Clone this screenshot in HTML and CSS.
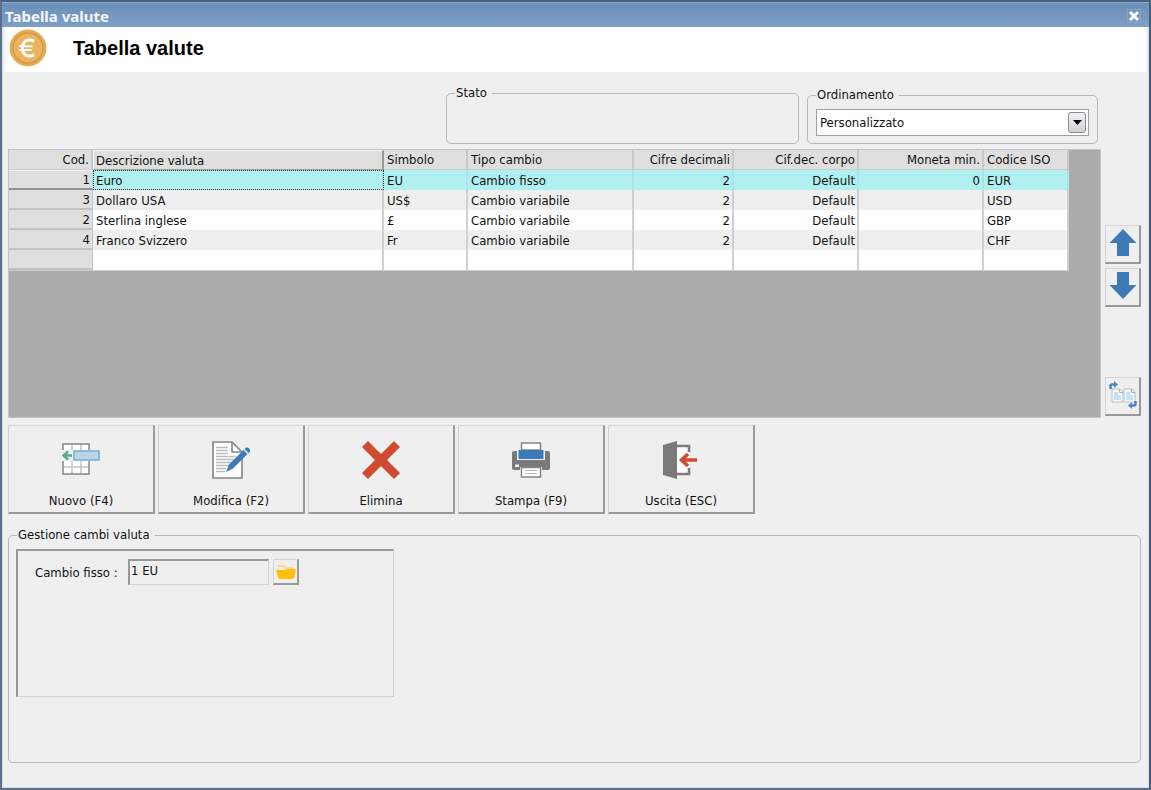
FILE: index.html
```html
<!DOCTYPE html>
<html lang="it">

<head>
    <meta charset="UTF-8">
    <meta name="viewport" content="width=device-width, initial-scale=1.0">
    <title>Tabella valute</title>
    <link rel="stylesheet" href="styles.css">
</head>

<body>
    <div class="window">
        <!-- Barra del titolo -->
        <div class="titlebar">
            <span class="titlebar-text">Tabella valute</span>
            <button class="close" type="button" aria-label="Chiudi">
                <svg width="12" height="12" viewBox="0 0 12 12"><path d="M2 2l8 8M10 2l-8 8" stroke="#fff" stroke-width="3"/></svg>
            </button>
        </div>

        <div class="client">
            <header class="header">
                <svg class="coin" width="38" height="38" viewBox="0 0 38 38">
                    <circle cx="19" cy="19" r="18.5" fill="#e5ac54"/>
                    <circle cx="19" cy="19" r="15" fill="#ebb560" stroke="#d19b48" stroke-width="1.5"/>
                    <path d="M25 12.200c-6-3-11.500-.5-11.500 6.800s5.500 9.800 11.500 6.800" fill="none" stroke="#fff" stroke-width="3"/>
                    <path d="M10 17.200h13.500M10 21h12.500" fill="none" stroke="#fff" stroke-width="2"/>
                </svg>
                <h1>Tabella valute</h1>
            </header>

            <main class="main">
                <!-- Stato e ordinamento -->
                <div class="filters">
                    <fieldset class="group stato">
                        <legend>Stato</legend>
                    </fieldset>
                    <fieldset class="group ordinamento">
                        <legend><label for="ordinamento">Ordinamento</label></legend>
                        <div class="combo">
                            <select id="ordinamento">
                                <option>Personalizzato</option>
                            </select>
                            <span class="combo-arrow">
                                <svg width="9" height="5" viewBox="0 0 9 5"><path d="M0 0h9L4.500 5z" fill="#000"/></svg>
                            </span>
                        </div>
                    </fieldset>
                </div>

                <!-- Griglia delle valute -->
                <div class="work">
                    <div class="grid-area">
                        <table class="grid">
                            <colgroup>
                                <col class="col-cod">
                                <col class="col-desc">
                                <col class="col-sim">
                                <col class="col-tipo">
                                <col class="col-cifre">
                                <col class="col-corpo">
                                <col class="col-corpo">
                                <col class="col-iso">
                            </colgroup>
                            <thead>
                                <tr>
                                    <th class="num">Cod.</th>
                                    <th class="sorted">Descrizione valuta</th>
                                    <th>Simbolo</th>
                                    <th>Tipo cambio</th>
                                    <th class="num">Cifre decimali</th>
                                    <th class="num">Cif.dec. corpo</th>
                                    <th class="num">Moneta min.</th>
                                    <th>Codice ISO</th>
                                </tr>
                            </thead>
                            <tbody>
                                <tr class="selected">
                                    <td class="num">1</td>
                                    <td class="focus">Euro</td>
                                    <td>EU</td>
                                    <td>Cambio fisso</td>
                                    <td class="num">2</td>
                                    <td class="num">Default</td>
                                    <td class="num">0</td>
                                    <td>EUR</td>
                                </tr>
                                <tr class="alt">
                                    <td class="num">3</td>
                                    <td>Dollaro USA</td>
                                    <td>US$</td>
                                    <td>Cambio variabile</td>
                                    <td class="num">2</td>
                                    <td class="num">Default</td>
                                    <td></td>
                                    <td>USD</td>
                                </tr>
                                <tr>
                                    <td class="num">2</td>
                                    <td>Sterlina inglese</td>
                                    <td>£</td>
                                    <td>Cambio variabile</td>
                                    <td class="num">2</td>
                                    <td class="num">Default</td>
                                    <td></td>
                                    <td>GBP</td>
                                </tr>
                                <tr class="alt">
                                    <td class="num">4</td>
                                    <td>Franco Svizzero</td>
                                    <td>Fr</td>
                                    <td>Cambio variabile</td>
                                    <td class="num">2</td>
                                    <td class="num">Default</td>
                                    <td></td>
                                    <td>CHF</td>
                                </tr>
                                <tr>
                                    <td></td>
                                    <td></td>
                                    <td></td>
                                    <td></td>
                                    <td></td>
                                    <td></td>
                                    <td></td>
                                    <td></td>
                                </tr>
                            </tbody>
                        </table>
                    </div>

                    <div class="side">
                        <button class="btn side-btn" type="button" aria-label="Sposta su">
                            <svg width="28" height="28" viewBox="0 0 28 28"><path d="M14 0L27.500 14H20v13H8V14H.5z" fill="#3d7ab8"/></svg>
                        </button>
                        <button class="btn side-btn" type="button" aria-label="Sposta giù">
                            <svg width="28" height="28" viewBox="0 0 28 28"><path d="M14 27L27.500 13H20V0H8v13H.5z" fill="#3d7ab8"/></svg>
                        </button>
                        <button class="btn side-btn copy" type="button" aria-label="Duplica">
                            <svg width="28" height="28" viewBox="0 0 28 28">
                                <path d="M3 8h8l3 3v10H3zM15 8h8l3 3v10H15z" fill="#f6f6f6" stroke="#c0c0c0"/>
                                <path d="M10.500 8v3.500H14M22.500 8v3.500H26" fill="none" stroke="#b0b0b0"/>
                                <path d="M5 11h4v3h3v5H5zM17 11h4v3h3v5h-7z" fill="#bfe4fa"/>
                                <path d="M1.500 8V5q0-1.500 1.500-1.500h3" fill="none" stroke="#4f87bd" stroke-width="2.600"/>
                                <path d="M5 0l4 3.500L5 7z" fill="#4f87bd"/>
                                <path d="M26.500 20v3q0 1.500-1.500 1.500h-3" fill="none" stroke="#4f87bd" stroke-width="2.600"/>
                                <path d="M23 21l-4 3.500 4 3.500z" fill="#4f87bd"/>
                            </svg>
                        </button>
                    </div>
                </div>

                <!-- Pulsanti principali -->
                <div class="toolbar">
                    <button class="btn tool" type="button">
                        <svg width="38" height="38" viewBox="0 0 38 38">
                            <path d="M1 3h26v30H1z" fill="#fff"/>
                            <path d="M10 3v30M19 3v30M1 26h26" stroke="#c4c4c4" stroke-width="1.500"/>
                            <path d="M1 9V3h26v6M1 20v13h26V20" fill="none" stroke="#858585" stroke-width="1.500"/>
                            <path d="M0 9h30v11H0z" fill="#efefef"/>
                            <path d="M12 10h25v9H12z" fill="#bfd3e8" stroke="#6fb1d2" stroke-width="1.600"/>
                            <path d="M10 14.500H2M6 10.500l-4.500 4 4.500 4" fill="none" stroke="#55ab85" stroke-width="2.400"/>
                        </svg>
                        <span>Nuovo (F4)</span>
                    </button>
                    <button class="btn tool" type="button">
                        <svg width="38" height="38" viewBox="0 0 38 38">
                            <path d="M1 1h19l10 10v26H1z" fill="#fff" stroke="#858585" stroke-width="1.600"/>
                            <path d="M20 1v10h10" fill="none" stroke="#858585" stroke-width="1.600"/>
                            <path d="M4 6.500h12M4 9.500h12M4 12.500h12M4 15.500h20M4 18.500h19M4 21.500h16M4 24.500h13M4 27.500h10M4 30.500h9" stroke="#bcbcbc" stroke-width="1.300"/>
                            <path d="M14 31l3-7.500L31.500 9l4 4L21 27.500z" fill="#3d7ab8"/>
                            <path d="M32.500 8l1.500-1.500h2L38 8.500v2L36.500 12z" fill="#3d7ab8"/>
                        </svg>
                        <span>Modifica (F2)</span>
                    </button>
                    <button class="btn tool" type="button">
                        <svg width="38" height="38" viewBox="0 0 38 38"><path d="M6 0l13 13L32 0l6 6-13 13 13 13-6 6-13-13L6 38l-6-6 13-13L0 6z" fill="#d04a30"/></svg>
                        <span>Elimina</span>
                    </button>
                    <button class="btn tool" type="button">
                        <svg width="38" height="38" viewBox="0 0 38 38">
                            <rect x="0" y="10" width="38" height="19" rx="2" fill="#7a7a7a"/>
                            <path d="M5 9v10h28V9" fill="#efefef"/>
                            <path d="M9.500 9V2h19v7z" fill="#fff" stroke="#858585" stroke-width="1.500"/>
                            <path d="M6.500 9h25v9h-25z" fill="#3d7ab8"/>
                            <rect x="3" y="23.500" width="4" height="2.500" rx="1" fill="#fff"/>
                            <path d="M8 26h22v4H8z" fill="#efefef"/>
                            <path d="M9.500 26.500h19V36h-19z" fill="#fff" stroke="#858585" stroke-width="1.500"/>
                            <path d="M13 29.500h12M13 32.500h12" stroke="#b8b8b8" stroke-width="1.200"/>
                        </svg>
                        <span>Stampa (F9)</span>
                    </button>
                    <button class="btn tool" type="button">
                        <svg width="38" height="38" viewBox="2 0 38 38">
                            <path d="M17 5h12v28H17z" fill="#fff"/>
                            <path d="M17 5h12v6M29 27v6H17" fill="none" stroke="#7a7a7a" stroke-width="2.600"/>
                            <path d="M3 4l14-4v38L3 34z" fill="#7a7a7a"/>
                            <path d="M37 19H22M28 13l-6.500 6 6.500 6" fill="none" stroke="#d04a30" stroke-width="3.600"/>
                        </svg>
                        <span>Uscita (ESC)</span>
                    </button>
                </div>

                <!-- Gestione cambi -->
                <fieldset class="group cambi">
                    <legend>Gestione cambi valuta</legend>
                    <div class="panel">
                        <label for="cambio">Cambio fisso :</label>
                        <input class="field" id="cambio" type="text" value="1 EU" readonly>
                        <button class="btn folder" type="button" aria-label="Apri">
                            <svg width="20" height="16" viewBox="0 0 20 16">
                                <path d="M2 2q0-1 1-1h5l2 2h7q1 0 1 1v5H2z" fill="#fbd99a"/>
                                <path d="M3 3h4l2 2h8v3H3z" fill="#fff3dc"/>
                                <path d="M0 6h9l1-1h10l-1.500 8q-.3 2-2 2H4q-2 0-2.300-2z" fill="#ffc010"/>
                            </svg>
                        </button>
                    </div>
                </fieldset>
            </main>
        </div>
    </div>
</body>

</html>
```
FILE: styles.css
```css
* {
    box-sizing: border-box;
}

body {
    margin: 0;
    font-family: "DejaVu Sans Condensed", "DejaVu Sans", Tahoma, sans-serif;
    font-size: 13px;
    line-height: 18px;
    color: #111;
}

button,
input,
select {
    font: inherit;
    color: inherit;
}

svg {
    display: block;
}

.window {
    display: flex;
    flex-direction: column;
    min-height: 100vh;
    border: 2px solid #5b708a;
    border-top-color: #4a617d;
    border-right-color: #465c78;
    background: #efefef;
}

/* barra del titolo */
.titlebar {
    display: flex;
    align-items: center;
    justify-content: space-between;
    height: 25px;
    padding: 1px 8px 0 3px;
    border-top: 1px solid #90add0;
    background: linear-gradient(#6a8fb8, #7d9fc5);
}

.titlebar-text {
    font-family: "Noto Sans", sans-serif;
    font-size: 15px;
    font-weight: bold;
    color: #f4f7fb;
}

.close {
    padding: 0;
    border: 1px solid #87a5c8;
    background: none;
}

.client {
    display: flex;
    flex: 1;
    flex-direction: column;
    padding: 0 2px;
    border: 1px solid #d5dde8;
    border-top: 0;
}

.header {
    display: flex;
    align-items: center;
    gap: 26px;
    height: 45px;
    padding: 0 0 4px 4px;
    background: #fff;
}

h1 {
    margin: 0;
    font-family: "Liberation Sans", Arial, sans-serif;
    font-size: 20px;
    line-height: 24px;
    color: #000;
}

.main {
    display: flex;
    flex: 1;
    flex-direction: column;
    padding: 12px 5px 24px 3px;
}

/* riquadri con titolo */
.group {
    min-width: 0;
    margin: 0;
    padding: 0 8px;
    border: 1px solid #b8b8b8;
    border-radius: 5px;
}

.group legend {
    padding: 0 5px 0 1px;
}

.filters {
    display: flex;
    align-items: flex-end;
    justify-content: flex-end;
    gap: 8px;
    padding-right: 43px;
}

.stato {
    width: 353px;
    height: 60px;
}

.ordinamento {
    width: 291px;
    height: 58px;
}

.combo {
    position: relative;
    margin-top: 5px;
}

.combo select {
    display: block;
    width: 100%;
    height: 27px;
    padding: 0 3px;
    border: 1px solid #a0a0a0;
    border-radius: 0;
    background: #fff;
    appearance: none;
}

.combo-arrow {
    position: absolute;
    top: 3px;
    right: 3px;
    display: flex;
    align-items: center;
    justify-content: center;
    width: 18px;
    height: 21px;
    border: 1px solid #8c8c8c;
    border-radius: 3px;
    background: linear-gradient(#f4f4f6, #cfcfd6);
    pointer-events: none;
}

/* griglia */
.work {
    display: flex;
    gap: 4px;
    margin-top: 5px;
}

.grid-area {
    flex: 1;
    min-width: 0;
    height: 269px;
    border: 1px solid #c4c4c8;
    background: #ababab;
}

.grid {
    width: 1060px;
    table-layout: fixed;
    border-collapse: separate;
    border-spacing: 0;
    border-bottom: 1px solid #ccc;
}

.col-cod {
    width: 84px;
}

.col-desc {
    width: 291px;
}

.col-sim {
    width: 84px;
}

.col-tipo {
    width: 166px;
}

.col-cifre {
    width: 100px;
}

.col-corpo {
    width: 125px;
}

.col-iso {
    width: 85px;
}

.grid th,
.grid td {
    height: 20px;
    padding: 0 3px;
    border-right: 2px solid #d0d0d0;
    background: #fff;
    font-weight: normal;
    line-height: 17px;
    text-align: left;
    white-space: nowrap;
}

.grid th {
    border-right-color: #c8c8c8;
    border-bottom: 1px solid #ccc;
    background: #dfdfdf;
}

.grid .num {
    padding-right: 2px;
    text-align: right;
}

.grid td:first-child {
    border-right: 1px solid #c4c4c8;
    border-bottom: 2px solid #c2c2c4;
    background: #dfdfdf;
}

.grid .alt td {
    background: #efefef;
}

.grid .alt td:first-child {
    background: #dfdfdf;
}

.grid .selected td {
    border-right-color: #aae4e4;
    background: #b0f0f0;
}

.grid .selected td:first-child {
    border-top: 1px solid #f6f6f6;
    border-bottom-color: #929292;
    background: #dfdfdf;
}

.grid .sorted {
    padding-left: 2px;
    border-top: 1px solid #f4f4f4;
    border-left: 1px solid #f4f4f4;
    border-bottom-color: #999;
    border-right-color: #999;
}

.grid .focus {
    outline: 1px dotted #333;
    outline-offset: -1px;
}

/* pulsanti in rilievo */
.btn {
    border: 1px solid #d2d2da;
    border-right: 2px solid #999;
    border-bottom: 2px solid #999;
    border-radius: 0;
    background: #efefef;
}

.side {
    display: flex;
    flex-direction: column;
    gap: 4px;
    width: 36px;
    padding: 76px 0 2px;
}

.side-btn {
    display: flex;
    justify-content: center;
    height: 39px;
    padding: 3px 0 0;
}

.side .copy {
    margin-top: auto;
}

.toolbar {
    display: flex;
    gap: 3px;
    margin-top: 7px;
}

.tool {
    display: flex;
    flex-direction: column;
    align-items: center;
    gap: 13px;
    width: 147px;
    height: 89px;
    padding: 15px 0 0;
}

/* gestione cambi */
.cambi {
    flex: 1;
    margin-top: 12px;
    padding: 0 7px;
}

.cambi legend {
    margin-left: 1px;
}

.panel {
    display: flex;
    align-items: flex-start;
    width: 378px;
    height: 148px;
    margin-top: 5px;
    padding: 8px 17px;
    border: 1px solid #d2d2da;
    border-top: 2px solid #999;
    border-left: 2px solid #999;
}

.panel label {
    width: 93px;
    padding-top: 5px;
}

.field {
    width: 141px;
    height: 26px;
    padding: 0 1px 4px;
    border: 1px solid #d2d2da;
    border-top: 2px solid #999;
    border-left: 2px solid #999;
    background: #efefef;
}

.folder {
    display: flex;
    align-items: center;
    justify-content: center;
    width: 26px;
    height: 26px;
    margin-left: 4px;
    padding: 0;
}
```
